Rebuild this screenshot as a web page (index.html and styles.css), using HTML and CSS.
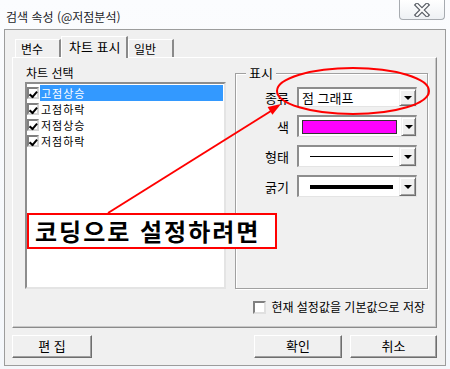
FILE: index.html
```html
<!DOCTYPE html>
<html lang="ko">
<head>
  <meta charset="UTF-8">
  <title>검색 속성</title>
  <link rel="stylesheet" href="styles.css">
</head>
<body>
  <div class="window">
    <div class="titlebar">
      <span class="title">검색 속성 (@저점분석)</span>
      <div class="close-btn">
        <svg width="18" height="14" viewBox="0 0 18 14">
          <path d="M4 2 L14 12 M14 2 L4 12" stroke="#5a5f66" stroke-width="4.5" stroke-linecap="square"/>
          <path d="M4 2 L14 12 M14 2 L4 12" stroke="#ffffff" stroke-width="2" stroke-linecap="square"/>
        </svg>
      </div>
    </div>

    <div class="dialog">
      <div class="tabs">
        <div class="tab first">변수</div>
        <div class="tab active">차트 표시</div>
        <div class="tab">일반</div>
      </div>

      <div class="panel">
        <div class="panel-main">
          <div class="chart-select">
            <div class="label">차트 선택</div>
            <div class="listbox">
              <div class="item selected"><span class="check"></span><span class="item-text">고점상승</span></div>
              <div class="item"><span class="check"></span><span class="item-text">고점하락</span></div>
              <div class="item"><span class="check"></span><span class="item-text">저점상승</span></div>
              <div class="item"><span class="check"></span><span class="item-text">저점하락</span></div>
            </div>
          </div>

          <div class="groupbox">
            <span class="group-title">표시</span>
            <div class="field">
              <span class="field-label">종류</span>
              <div class="combo short">
                <div class="combo-value"><span class="combo-text">점 그래프</span></div>
                <div class="drop"><span class="arrow"></span></div>
              </div>
            </div>
            <div class="field">
              <span class="field-label">색</span>
              <div class="combo">
                <div class="combo-value"><span class="swatch"></span></div>
                <div class="drop"><span class="arrow"></span></div>
              </div>
            </div>
            <div class="field">
              <span class="field-label">형태</span>
              <div class="combo">
                <div class="combo-value"><span class="line thin"></span></div>
                <div class="drop"><span class="arrow"></span></div>
              </div>
            </div>
            <div class="field">
              <span class="field-label">굵기</span>
              <div class="combo">
                <div class="combo-value"><span class="line thick"></span></div>
                <div class="drop"><span class="arrow"></span></div>
              </div>
            </div>
          </div>
        </div>

        <div class="save-row">
          <span class="box"></span>
          <span>현재 설정값을 기본값으로 저장</span>
        </div>
      </div>

      <div class="buttons">
        <div class="btn edit">편 집</div>
        <div class="spacer"></div>
        <div class="btn ok">확인</div>
        <div class="btn cancel">취소</div>
      </div>
    </div>

    <!-- 빨간 표시 (주석) -->
    <svg class="marks" width="450" height="369" viewBox="0 0 450 369">
      <ellipse cx="353" cy="91" rx="76" ry="23" fill="none" stroke="#ff0000" stroke-width="2"/>
      <line x1="108" y1="213" x2="271" y2="111" stroke="#ff0000" stroke-width="2"/>
      <polygon points="281,104 267.6,107.1 272.4,114.7" fill="#ff0000"/>
    </svg>
    <div class="note">코딩으로 설정하려면</div>
  </div>
</body>
</html>
```

FILE: styles.css
```css
* {
  margin: 0;
  padding: 0;
  box-sizing: border-box;
}

body {
  font-family: 'Noto Sans CJK KR', 'Noto Sans', sans-serif;
  font-size: 12px;
  color: #000;
  background: #ffffff;
}

.window {
  position: relative;
  width: 450px;
  height: 369px;
  background: linear-gradient(180deg, #fbfcfe, #f4f7fb);
  overflow: hidden;
}

.titlebar {
  height: 29px;
  display: flex;
  align-items: flex-start;
}

.title {
  padding: 9px 0 0 6px;
  line-height: 16px;
  font-size: 12px;
  color: #1c1c28;
}

.close-btn {
  margin-left: auto;
  margin-right: 5px;
  width: 46px;
  height: 20px;
  border: 1px solid #a7abb0;
  border-top: none;
  border-radius: 0 0 4px 4px;
  background: linear-gradient(180deg, #ffffff, #eef1f4);
  display: flex;
  justify-content: center;
  align-items: center;
}

.dialog {
  margin: 0 4px;
  height: 337px;
  border: 1px solid #9c9c9c;
  background: #f0f0f0;
  padding: 6px 8px 0 7px;
}

/* 탭 */
.tabs {
  display: flex;
  align-items: flex-end;
  height: 21px;
  padding-left: 3px;
}

.tab {
  height: 18px;
  width: 46px;
  padding-left: 5px;
  line-height: 17px;
  border-top: 1px solid #ffffff;
  border-left: 1px solid #ffffff;
  border-right: 2px solid #8a8a8a;
  background: #f0f0f0;
}

.tab.active {
  position: relative;
  z-index: 1;
  width: 67px;
  height: 22px;
  margin-bottom: -1px;
  padding-left: 7px;
  line-height: 19px;
  font-size: 13px;
}

.panel {
  width: 425px;
  height: 271px;
  border-top: 1px solid #ffffff;
  border-left: 1px solid #ffffff;
  border-right: 1px solid #8a8a8a;
  border-bottom: 1px solid #8a8a8a;
  box-shadow: inset -1px -1px 0 #c8c8c8;
  padding: 7px 0 0 12px;
}

.panel-main {
  display: flex;
  gap: 9px;
}

.chart-select .label {
  height: 17px;
  line-height: 15px;
  padding-left: 1px;
}

.listbox {
  width: 201px;
  height: 207px;
  background: #ffffff;
  border-top: 2px solid #8d8d8d;
  border-left: 2px solid #8d8d8d;
  border-right: 2px solid #e4e4e4;
  border-bottom: 2px solid #e4e4e4;
  padding-top: 1px;
}

.item {
  display: flex;
  align-items: center;
  height: 16px;
}

.check {
  width: 12px;
  height: 12px;
  margin-right: 1px;
  border: 2px solid #808080;
  border-right-color: #d4d4d4;
  border-bottom-color: #d4d4d4;
  background: #fff;
  position: relative;
}

.check::after {
  content: '';
  position: absolute;
  left: 5px;
  top: 0;
  width: 3px;
  height: 6px;
  border: solid #000;
  border-width: 0 2px 2px 0;
  transform: rotate(40deg);
  transform-origin: 0 0;
}

.item-text {
  flex: 1;
  height: 16px;
  line-height: 16px;
  padding-left: 1px;
  font-size: 11px;
  letter-spacing: 1px;
}

.item.selected .item-text {
  background: #3399ff;
  color: #ffffff;
  margin-right: 1px;
}

/* 표시 그룹 */
.groupbox {
  position: relative;
  margin-top: 8px;
  width: 193px;
  height: 216px;
  border: 1px solid #a0a0a0;
  box-shadow: inset 1px 1px 0 #ffffff, 1px 1px 0 #ffffff;
  padding-top: 13px;
  display: flex;
  flex-direction: column;
  gap: 8px;
}

.group-title {
  position: absolute;
  left: 10px;
  top: -9px;
  padding: 0 3px;
  line-height: 16px;
  font-size: 13px;
  background: #f0f0f0;
}

.field {
  display: flex;
  align-items: center;
}

.field-label {
  width: 53px;
  margin-right: 8px;
  text-align: right;
  font-size: 13px;
}

.combo {
  width: 120px;
  height: 22px;
  display: flex;
  background: #ffffff;
  border-top: 2px solid #8d8d8d;
  border-left: 2px solid #8d8d8d;
  border-right: 1px solid #e4e4e4;
  border-bottom: 1px solid #e4e4e4;
}

.combo.short {
  height: 20px;
}

.combo-value {
  flex: 1;
  display: flex;
  align-items: center;
  padding: 0 4px 0 3px;
}

.combo-text {
  font-size: 13px;
  line-height: 16px;
}

.swatch {
  width: 95px;
  height: 14px;
  background: #ff00ff;
  border: 1px solid #333;
}

.line {
  margin-left: 8px;
  width: 83px;
  background: #000;
}

.line.thin {
  height: 1px;
}

.line.thick {
  height: 4px;
}

.drop {
  width: 17px;
  background: #f0f0f0;
  border-top: 1px solid #f0f0f0;
  border-left: 1px solid #f0f0f0;
  border-right: 1px solid #6e6e6e;
  border-bottom: 1px solid #6e6e6e;
  box-shadow: inset 1px 1px 0 #ffffff, inset -1px -1px 0 #a0a0a0;
  display: flex;
  justify-content: center;
  align-items: center;
}

.arrow {
  width: 0;
  height: 0;
  border-left: 4px solid transparent;
  border-right: 4px solid transparent;
  border-top: 4px solid #000;
}

.save-row {
  margin-top: 11px;
  margin-right: 11px;
  display: flex;
  justify-content: flex-end;
  align-items: center;
  gap: 5px;
  height: 14px;
  font-size: 12px;
  line-height: 14px;
}

.save-row .box {
  width: 13px;
  height: 13px;
  background: #fff;
  border: 2px solid #808080;
  border-right-color: #e0e0e0;
  border-bottom-color: #e0e0e0;
}

/* 하단 버튼 */
.buttons {
  margin-top: 7px;
  display: flex;
  gap: 8px;
  width: 425px;
}

.spacer {
  flex: 1;
}

.btn {
  height: 23px;
  line-height: 20px;
  text-align: center;
  font-size: 13px;
  background: #f0f0f0;
  border-top: 1px solid #ffffff;
  border-left: 1px solid #ffffff;
  border-right: 1px solid #6e6e6e;
  border-bottom: 1px solid #6e6e6e;
  box-shadow: inset -1px -1px 0 #a0a0a0;
}

.btn.edit {
  width: 80px;
}

.btn.ok {
  width: 88px;
}

.btn.cancel {
  width: 87px;
}

/* 주석 표시 */
.marks {
  position: absolute;
  left: 0;
  top: 0;
  pointer-events: none;
}

.note {
  position: absolute;
  left: 27px;
  top: 213px;
  width: 250px;
  height: 36px;
  border: 2px solid #ff0000;
  background: #ffffff;
  padding-left: 6px;
  font-size: 24px;
  font-weight: bold;
  line-height: 31px;
  letter-spacing: 2px;
  white-space: nowrap;
}
```
